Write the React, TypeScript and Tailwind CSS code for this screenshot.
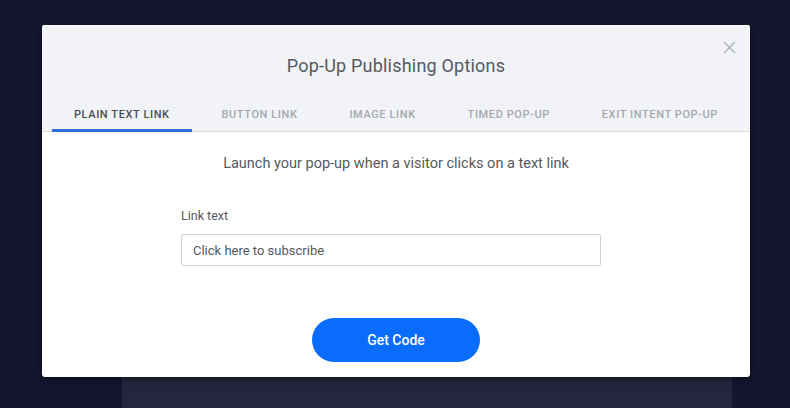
import { useState } from "react";

const tabs = [
  "Plain Text Link",
  "Button Link",
  "Image Link",
  "Timed Pop-Up",
  "Exit Intent Pop-Up",
];

const CloseIcon = () => (
  <svg width="13" height="13" viewBox="0 0 13 13" fill="none">
    <path d="M1 1l11 11M12 1L1 12" stroke="#b4b8c0" strokeWidth="1.6" />
  </svg>
);

const App = () => {
  const [active, setActive] = useState(0);
  const [linkText, setLinkText] = useState("Click here to subscribe");

  return (
    <div
      className="relative h-[408px] w-[790px] overflow-hidden bg-[#141530]"
      style={{ fontFamily: "Roboto, 'Open Sans', sans-serif" }}
    >
      <div className="ml-[42px] mt-[25px] flex w-[708px] flex-col">
        <div className="relative z-10 flex h-[352px] flex-col overflow-hidden rounded-[3px] bg-white shadow-[0_2px_10px_rgba(0,0,0,0.45)]">
          <header className="relative border-t border-white bg-[#f1f3f7]">
            <button className="absolute right-[12px] top-[13px] p-0.5">
              <CloseIcon />
            </button>
            <h2 className="pt-[28px] text-center text-[18px] leading-[24px] tracking-[0.2px] text-[#555a60]">
              Pop-Up Publishing Options
            </h2>
            <nav className="mt-[30px] flex justify-between border-b border-[#d9dce2] px-[10px]">
              {tabs.map((tab, i) => (
                <button
                  key={tab}
                  onClick={() => setActive(i)}
                  className={
                    i === active
                      ? "-mb-px border-b-[3px] border-[#2f6fdc] px-[22px] pb-[7px] text-[11px] font-medium uppercase leading-[14px] tracking-[0.6px] text-[#4a4d52]"
                      : "-mb-px border-b-[3px] border-transparent px-[22px] pb-[7px] text-[11px] font-medium uppercase leading-[14px] tracking-[0.6px] text-[#a5a9af]"
                  }
                >
                  {tab}
                </button>
              ))}
            </nav>
          </header>

          <main className="flex flex-1 flex-col items-center">
            <p className="mt-[22px] text-[14.5px] leading-[20px] text-[#56595e]">
              Launch your pop-up when a visitor clicks on a text link
            </p>
            <div className="mr-[10px] mt-[34px] w-[420px]">
              <label className="block text-[12.5px] leading-[16px] text-[#55585d]">
                Link text
              </label>
              <input
                value={linkText}
                onChange={(e) => setLinkText(e.target.value)}
                className="mt-[10px] h-[32px] w-full rounded-[2px] border border-[#cfd2d7] px-[11px] text-[13px] text-[#55585d] outline-none"
              />
            </div>
            <button className="mt-[52px] h-[44px] w-[168px] rounded-full bg-[#0a6cfa] text-[14px] font-medium text-white">
              Get Code
            </button>
          </main>
        </div>
        <div className="ml-[80px] h-[40px] w-[610px] bg-[#25253f]" />
      </div>
    </div>
  );
};

export default App;
